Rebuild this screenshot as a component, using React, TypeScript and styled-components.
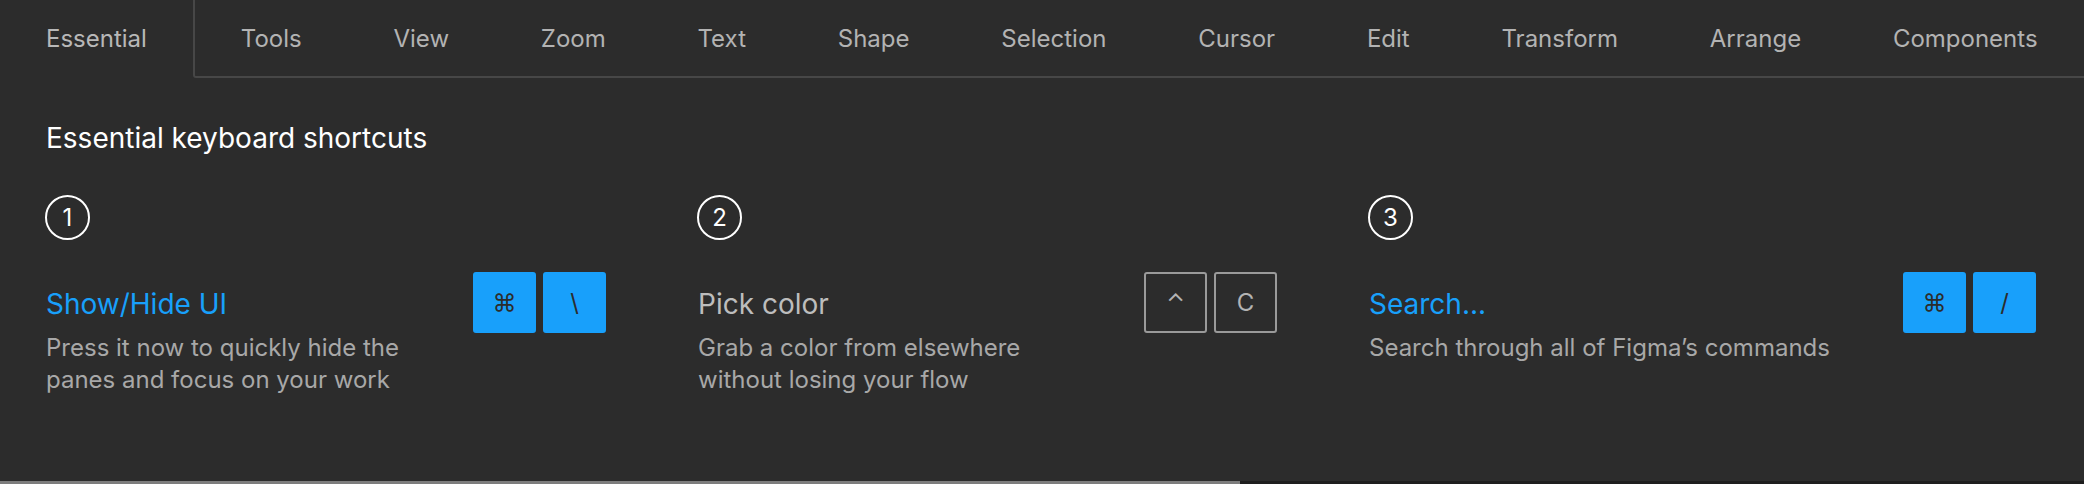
import * as React from "react";
import styled, { createGlobalStyle } from "styled-components";

const GlobalStyle = createGlobalStyle`
  html, body {
    margin: 0;
    padding: 0;
    background: #2c2c2c;
  }
  body {
    font-family: Inter, "DejaVu Sans", sans-serif;
    -webkit-font-smoothing: antialiased;
  }
`;

const tabs = [
  "Tools",
  "View",
  "Zoom",
  "Text",
  "Shape",
  "Selection",
  "Cursor",
  "Edit",
  "Transform",
  "Arrange",
  "Components",
];

type KeyVariant = "filled" | "outline";

const shortcuts: {
  title: string;
  lines: string[];
  keys: string[];
  variant: KeyVariant;
  width: number;
}[] = [
  {
    title: "Show/Hide UI",
    lines: ["Press it now to quickly hide the", "panes and focus on your work"],
    keys: ["⌘", "\\"],
    variant: "filled",
    width: 561,
  },
  {
    title: "Pick color",
    lines: ["Grab a color from elsewhere", "without losing your flow"],
    keys: ["⌃", "C"],
    variant: "outline",
    width: 580,
  },
  {
    title: "Search...",
    lines: ["Search through all of Figma’s commands"],
    keys: ["⌘", "/"],
    variant: "filled",
    width: 668,
  },
];

const App = (): JSX.Element => {
  return (
    <Page>
      <GlobalStyle />
      <TabBar>
        <ActiveTab>Essential</ActiveTab>
        <TabRest>
          {tabs.map((t) => (
            <Tab key={t}>{t}</Tab>
          ))}
        </TabRest>
      </TabBar>
      <Content>
        <Heading>Essential keyboard shortcuts</Heading>
        <Columns>
          {shortcuts.map((s, i) => (
            <Column key={s.title} width={s.width}>
              <StepBadge>{i + 1}</StepBadge>
              <ShortcutRow>
                <TextBlock>
                  <Title highlight={s.variant === "filled"}>{s.title}</Title>
                  <Description>
                    {s.lines.map((l, j) => (
                      <React.Fragment key={j}>
                        {l}
                        {j < s.lines.length - 1 && <br />}
                      </React.Fragment>
                    ))}
                  </Description>
                </TextBlock>
                <Keys>
                  {s.keys.map((k) => (
                    <Key key={k} variant={s.variant}>
                      {k}
                    </Key>
                  ))}
                </Keys>
              </ShortcutRow>
            </Column>
          ))}
        </Columns>
      </Content>
      <ScrollTrack>
        <ScrollThumb />
      </ScrollTrack>
    </Page>
  );
};

export default App;

const Page = styled.div`
  display: flex;
  flex-direction: column;
  height: 100vh;
  background: #2c2c2c;
  overflow: hidden;
`;

const TabBar = styled.div`
  display: flex;
  height: 78px;
  flex-shrink: 0;
`;

const ActiveTab = styled.div`
  display: flex;
  align-items: center;
  padding: 0 46px 2px 46px;
  font-size: 24px;
  color: #b8b8b8;
`;

const TabRest = styled.div`
  flex: 1;
  display: flex;
  border-left: 2px solid #474747;
  border-bottom: 2px solid #474747;
  border-bottom-left-radius: 3px;
`;

const Tab = styled.div`
  display: flex;
  align-items: center;
  padding: 0 45.9px;
  font-size: 24px;
  color: #b3b3b3;
  white-space: nowrap;
`;

const Content = styled.div`
  padding: 42px 48px 0 45px;
`;

const Heading = styled.div`
  font-size: 28px;
  line-height: 36px;
  font-weight: 400;
  color: #ffffff;
  padding-left: 1px;
`;

const Columns = styled.div`
  display: flex;
  gap: 91px;
  margin-top: 39px;
`;

const Column = styled.div<{ width: number }>`
  display: flex;
  flex-direction: column;
  width: ${({ width }) => width}px;
`;

const StepBadge = styled.div`
  width: 41px;
  height: 41px;
  border: 2px solid #ffffff;
  border-radius: 50%;
  display: flex;
  align-items: center;
  justify-content: center;
  font-size: 24px;
  color: #ffffff;
  margin-bottom: 32px;
`;

const ShortcutRow = styled.div`
  display: flex;
  justify-content: space-between;
  align-items: flex-start;
`;

const TextBlock = styled.div`
  display: flex;
  flex-direction: column;
  padding-top: 14px;
  padding-left: 1px;
`;

const Title = styled.div<{ highlight: boolean }>`
  font-size: 28px;
  line-height: 36px;
  color: ${({ highlight }) => (highlight ? "#18a0fb" : "#bdbdbd")};
  margin-bottom: 10px;
`;

const Description = styled.div`
  font-size: 24px;
  line-height: 32px;
  color: #a8a8a8;
  white-space: nowrap;
`;

const Keys = styled.div`
  display: flex;
  gap: 7px;
`;

const Key = styled.div<{ variant: KeyVariant }>`
  box-sizing: border-box;
  width: 63px;
  height: 61px;
  border-radius: 3px;
  display: flex;
  align-items: center;
  justify-content: center;
  font-size: 24px;
  background: ${({ variant }) => (variant === "filled" ? "#18a0fb" : "transparent")};
  color: ${({ variant }) => (variant === "filled" ? "#2c2c2c" : "#b3b3b3")};
  border: 2px solid ${({ variant }) => (variant === "filled" ? "#18a0fb" : "#9a9a9a")};
`;

const ScrollTrack = styled.div`
  margin-top: auto;
  height: 3px;
  background: #1e1e1e;
  display: flex;
`;

const ScrollThumb = styled.div`
  width: 1240px;
  background: #7d7d7d;
`;
